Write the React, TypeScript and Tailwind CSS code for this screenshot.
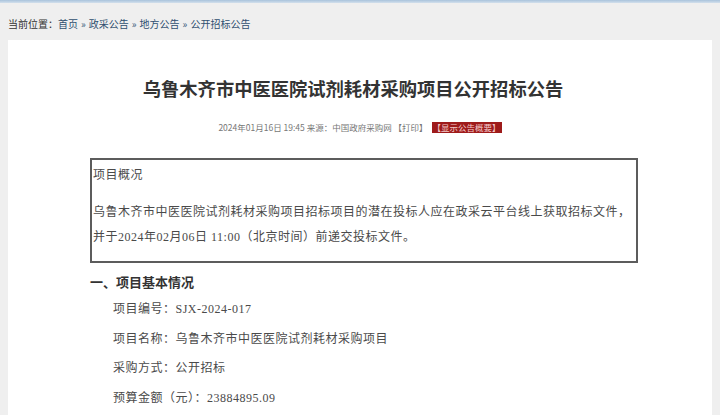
export default function App() {
  const sans = { fontFamily: '"Noto Sans CJK SC", "Noto Sans", sans-serif' };
  const song = { fontFamily: '"Liberation Serif", "Noto Sans CJK SC", serif' };

  const crumbs = ['首页', '政采公告', '地方公告', '公开招标公告'];
  const items = [
    '项目编号：SJX-2024-017',
    '项目名称：乌鲁木齐市中医医院试剂耗材采购项目',
    '采购方式：公开招标',
    '预算金额（元）：23884895.09',
  ];

  return (
    <div className="h-screen bg-[#efefef] overflow-hidden" style={sans}>
      <div className="h-[3px] bg-gradient-to-b from-[#a9c3dc] to-[#d3e0ec]" />

      {/* breadcrumb */}
      <div className="h-[37px] pt-[13px] pl-[8px] text-[10px] leading-[16px] text-[#333]">
        当前位置：
        {crumbs.map((c, i) => (
          <span key={c}>
            {i > 0 && <span className="text-[#41607e] px-[3px]">»</span>}
            <span className="text-[#2f4f70]">{c}</span>
          </span>
        ))}
      </div>

      <div className="mx-[8px] bg-white h-[375px]">
        <h1 className="pt-[36px] pr-[14px] text-center text-[18.3px] leading-[24px] font-bold text-[#333]">
          乌鲁木齐市中医医院试剂耗材采购项目公开招标公告
        </h1>

        <div className="mt-[21px] flex justify-center items-center text-[8.5px] leading-[12px] text-[#777]">
          <span>2024年01月16日 19:45 来源：中国政府采购网 【打印】</span>
          <span className="ml-[4px] bg-[#9e1b1b] text-[#f4caca] px-[1px] leading-[11px]">【显示公告概要】</span>
        </div>

        <div
          className="mt-[25px] ml-[82px] w-[548px] border-2 border-[#5c5c5c] pt-[3px] pb-[11px] pl-[1px] text-[12px] leading-[25px] tracking-[0.5px] text-[#4a4a4a]"
          style={song}
        >
          <p>项目概况</p>
          <p className="mt-[12px]">
            乌鲁木齐市中医医院试剂耗材采购项目招标项目的潜在投标人应在政采云平台线上获取招标文件，
            <br />
            并于2024年02月06日 11:00（北京时间）前递交投标文件。
          </p>
        </div>

        <h2 className="mt-[9px] ml-[82px] text-[13px] leading-[20px] font-bold text-[#333]">
          一、项目基本情况
        </h2>

        <div className="mt-[3px] ml-[105px] text-[12px] leading-[29.5px] tracking-[0.5px] text-[#4a4a4a]" style={song}>
          {items.map((t) => (
            <p key={t}>{t}</p>
          ))}
        </div>
      </div>
    </div>
  );
}
